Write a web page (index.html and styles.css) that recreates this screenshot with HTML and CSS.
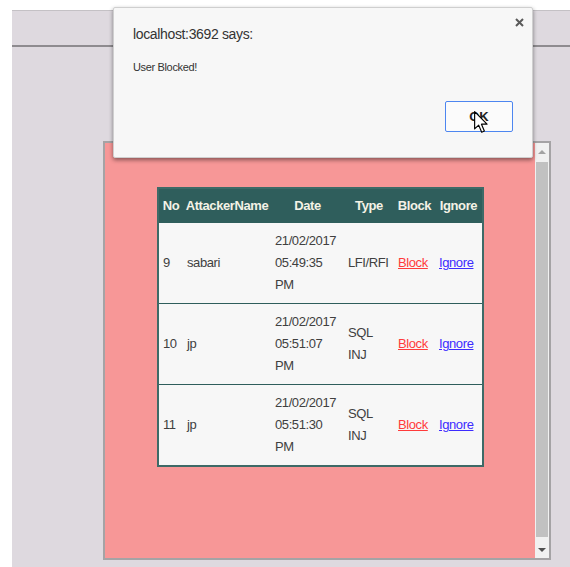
FILE: index.html
```html
<!DOCTYPE html>
<html>
<head>
<meta charset="utf-8">
<title>Attack Log</title>
<link rel="stylesheet" href="styles.css">
</head>
<body>
<div class="window">
  <div class="toolbar"></div>
  <div class="content">
    <div class="scrollbox">
      <div class="pane">
        <table class="grid">
          <colgroup>
            <col class="c-no"><col class="c-name"><col class="c-date"><col class="c-type"><col class="c-block"><col class="c-ignore">
          </colgroup>
          <thead>
            <tr><th>No</th><th>AttackerName</th><th>Date</th><th>Type</th><th>Block</th><th>Ignore</th></tr>
          </thead>
          <tbody>
            <tr>
              <td>9</td><td>sabari</td><td>21/02/2017 05:49:35 PM</td><td>LFI/RFI</td>
              <td><a class="lnk-block" href="#">Block</a></td><td><a class="lnk-ignore" href="#">Ignore</a></td>
            </tr>
            <tr>
              <td>10</td><td>jp</td><td>21/02/2017 05:51:07 PM</td><td>SQL INJ</td>
              <td><a class="lnk-block" href="#">Block</a></td><td><a class="lnk-ignore" href="#">Ignore</a></td>
            </tr>
            <tr>
              <td>11</td><td>jp</td><td>21/02/2017 05:51:30 PM</td><td>SQL INJ</td>
              <td><a class="lnk-block" href="#">Block</a></td><td><a class="lnk-ignore" href="#">Ignore</a></td>
            </tr>
          </tbody>
        </table>
      </div>
      <div class="scrollbar">
        <div class="sb-btn"><span class="tri-up"></span></div>
        <div class="sb-track"><div class="sb-thumb"></div></div>
        <div class="sb-btn"><span class="tri-down"></span></div>
      </div>
    </div>
  </div>
</div>

<div class="alert">
  <svg class="alert-close" width="9" height="9" viewBox="0 0 9 9"><path d="M1 1L8 8M8 1L1 8" stroke="#5a5a5a" stroke-width="2"/></svg>
  <div class="alert-title">localhost:3692 says:</div>
  <div class="alert-msg">User Blocked!</div>
  <div class="alert-actions">
    <button class="alert-ok">OK</button>
    <svg class="pointer" width="14" height="22" viewBox="0 0 12 19"><path d="M0.5 0.5V15.5L4 12.2L6.6 18.3L8.9 17.3L6.4 11.4H11.2Z" fill="#fff" stroke="#000" stroke-width="1" stroke-linejoin="round"/></svg>
  </div>
</div>
</body>
</html>
```
FILE: styles.css
```css
* { box-sizing: border-box; }

body {
  margin: 0;
  background: #ffffff;
  font-family: "Liberation Sans", Arial, sans-serif;
}

.window {
  margin: 10px 0 0 12px;
  height: 557px;
  background: #ded9df;
  border-top: 1px solid #c4c1c5;
}

.toolbar {
  height: 36px;
  border-bottom: 2px solid #8e8b8f;
}

.content {
  padding: 94px 0 0 91px;
}

.scrollbox {
  width: 448px;
  height: 419px;
  border: 2px solid #a5a3a5;
  display: flex;
}

.pane {
  flex: 1;
  background: #f79797;
  padding: 44px 0 0 52px;
}

/* data grid */
.grid {
  table-layout: fixed;
  width: 327px;
  border-collapse: separate;
  border-spacing: 0;
  border: 2px solid #3e6a67;
  background: #f7f7f7;
  font-size: 13px;
  letter-spacing: -0.4px;
  line-height: 22px;
  color: #404040;
}
.c-no { width: 24px; }
.c-name { width: 88px; }
.c-date { width: 73px; }
.c-type { width: 50px; }
.c-block { width: 41px; }
.c-ignore { width: 47px; }

.grid th {
  background: #2f5e5c;
  color: #f4f2e6;
  font-weight: bold;
  text-align: center;
  padding: 6px 0;
  white-space: nowrap;
}
.grid td {
  padding: 7px 4px 7px 4px;
  vertical-align: middle;
  border-top: 1px solid #2f5e5c;
}
.grid tbody tr:first-child td { border-top: none; }

.lnk-block { color: #ff3b3b; }
.lnk-ignore { color: #3d2bff; }

/* scrollbar */
.scrollbar {
  width: 14px;
  background: #f1f1f1;
  display: flex;
  flex-direction: column;
}
.sb-btn {
  height: 17px;
  display: flex;
  align-items: center;
  justify-content: center;
}
.tri-up {
  border-left: 4px solid transparent;
  border-right: 4px solid transparent;
  border-bottom: 4px solid #a3a3a3;
}
.tri-down {
  border-left: 4px solid transparent;
  border-right: 4px solid transparent;
  border-top: 4px solid #505050;
}
.sb-track {
  flex: 1;
  padding: 2px 1px 4px 1px;
  display: flex;
}
.sb-thumb {
  flex: 1;
  background: #c1c1c1;
}

/* alert dialog */
.alert {
  position: absolute;
  left: 113px;
  top: 7px;
  width: 420px;
  height: 151px;
  background: #f7f7f7;
  border: 1px solid #cfcfcf;
  border-radius: 2px;
  box-shadow: 0 2px 4px rgba(0, 0, 0, 0.45);
  padding: 17px 19px 25px 19px;
  display: flex;
  flex-direction: column;
  color: #333;
}
.alert-close {
  position: absolute;
  right: 8px;
  top: 10px;
}
.alert-title {
  font-size: 14px;
  letter-spacing: -0.35px;
  line-height: 18px;
}
.alert-msg {
  font-size: 11px;
  letter-spacing: -0.35px;
  line-height: 14px;
  margin-top: 17px;
}
.alert-actions {
  margin-top: auto;
  display: flex;
  justify-content: flex-end;
  position: relative;
}
.alert-ok {
  width: 68px;
  height: 31px;
  background: #fbfbfb;
  border: 1px solid #4d86f0;
  border-radius: 2px;
  font-family: "Liberation Sans", Arial, sans-serif;
  font-size: 13px;
  font-weight: bold;
  color: #222;
  padding: 0;
}
.pointer {
  position: absolute;
  left: 341px;
  top: 10px;
}
```
